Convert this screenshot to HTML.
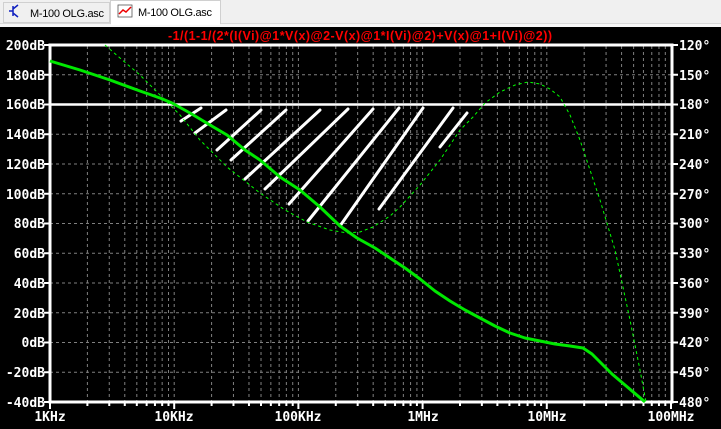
<!DOCTYPE html>
<html><head><meta charset="utf-8"><style>
html,body{margin:0;padding:0;width:721px;height:429px;overflow:hidden;background:#000}
</style></head><body>
<svg width="721" height="429" viewBox="0 0 721 429" xmlns="http://www.w3.org/2000/svg" style="display:block">
<rect x="0" y="0" width="721" height="27" fill="#f0f0f0"/>
<rect x="0" y="23" width="721" height="4" fill="#f7f7f7"/>
<line x1="0" y1="23.5" x2="721" y2="23.5" stroke="#d9d9d9"/>
<rect x="3.5" y="2.5" width="106" height="20" fill="#f0f0f0" stroke="#d0d0d0"/>
<rect x="110.5" y="0.5" width="110" height="23" fill="#fff" stroke="#d0d0d0"/>
<rect x="111" y="20" width="109" height="5" fill="#fff"/>
<g stroke="#1020c0" stroke-width="1.5" fill="none"><path d="M13 6v10M13 11h-4M13 9l5-4M13 13l5 4"/></g>
<text x="30" y="17" font-family="Liberation Sans,sans-serif" font-size="11" fill="#000" textLength="74">M-100 OLG.asc</text>
<g><rect x="118" y="5" width="14" height="12" fill="none" stroke="#555" stroke-width="0.8"/><path d="M119 14l4-4 3 2 5-5" stroke="#e00" stroke-width="1.5" fill="none"/></g>
<text x="138" y="16" font-family="Liberation Sans,sans-serif" font-size="11" fill="#000" textLength="74">M-100 OLG.asc</text>

<text x="360" y="40" text-anchor="middle" font-family="Liberation Sans,sans-serif" font-weight="bold" font-size="12.5" fill="#ff0000" textLength="384">-1/(1-1/(2*(I(Vi)@1*V(x)@2-V(x)@1*I(Vi)@2)+V(x)@1+I(Vi)@2))</text>

<g stroke="#808080" stroke-width="1" stroke-dasharray="3,3" fill="none">
<path d="M50 74.75H672M50 104.5H672M50 134.25H672M50 164H672M50 193.75H672M50 223.5H672M50 253.25H672M50 283H672M50 312.75H672M50 342.5H672M50 372.25H672"/>
</g>
<g id="vlines" stroke="#808080" stroke-dasharray="3,3"></g>
<g id="ticks" stroke="#fff" stroke-width="2"></g>

<path d="M50 45H672V402H50Z" fill="none" stroke="#fff" stroke-width="3"/>
<line x1="50" y1="104.5" x2="672" y2="104.5" stroke="#fff" stroke-width="2.5"/>

<g stroke="#fff" stroke-width="3" stroke-linecap="round">
<line x1="181" y1="121" x2="201" y2="108"/>
<line x1="195" y1="133" x2="226" y2="110"/>
<line x1="217" y1="150" x2="261" y2="110"/>
<line x1="231" y1="160" x2="286" y2="110"/>
<line x1="245" y1="179" x2="320" y2="110"/>
<line x1="265" y1="189" x2="348" y2="109"/>
<line x1="289" y1="204" x2="373" y2="109"/>
<line x1="308" y1="221" x2="399" y2="108"/>
<line x1="340" y1="226" x2="423" y2="108"/>
<line x1="379" y1="209" x2="453" y2="108"/>
<line x1="440" y1="147" x2="467" y2="113"/>
</g>

<polyline fill="none" stroke="#00ff00" stroke-width="1" stroke-dasharray="3,3" points="105,45 120,58 140,75 160,95 180,115 200,140 227,167 260,193 285,210 307,222 330,230 347,233 360,232 373,227 390,216 400,207 420,185 440,160 460,130 473,117 485,103 500,92 515,85 528,82 540,84 550,89 560,97 570,115 580,140 600,200 615,250 630,320 640,370 646,402"/>
<polyline fill="none" stroke="#00e800" stroke-width="3" stroke-linejoin="round" points="50,61 80,70 110,80 140,91 160,98 172,103 190,113 210,125 227,135 245,150 260,160 280,177 300,190 320,207 340,226 357,238 375,248 390,258 405,268 420,279 435,291 450,301 465,310 480,318 495,326 510,333 525,338 540,341 555,344 570,346 583,348 592,354 600,362 612,374 625,385 645,402"/>

<g font-family="DejaVu Sans Mono,Liberation Mono,monospace" font-weight="bold" font-size="13" fill="#fff">
<g text-anchor="end">
<text x="45" y="50">200dB</text><text x="45" y="80">180dB</text><text x="45" y="109">160dB</text><text x="45" y="139">140dB</text><text x="45" y="169">120dB</text><text x="45" y="199">100dB</text><text x="45" y="228">80dB</text><text x="45" y="258">60dB</text><text x="45" y="288">40dB</text><text x="45" y="318">20dB</text><text x="45" y="347">0dB</text><text x="45" y="377">-20dB</text><text x="45" y="407">-40dB</text>
</g>
<g>
<text x="679" y="50">120°</text><text x="679" y="80">150°</text><text x="679" y="109">180°</text><text x="679" y="139">210°</text><text x="679" y="169">240°</text><text x="679" y="199">270°</text><text x="679" y="228">300°</text><text x="679" y="258">330°</text><text x="679" y="288">360°</text><text x="679" y="318">390°</text><text x="679" y="347">420°</text><text x="679" y="377">450°</text><text x="679" y="407">480°</text>
</g>
<g text-anchor="middle">
<text x="50" y="421">1KHz</text><text x="174" y="421">10KHz</text><text x="298" y="421">100KHz</text><text x="423" y="421">1MHz</text><text x="547" y="421">10MHz</text><text x="671" y="421">100MHz</text>
</g>
</g>
<g stroke="#fff" stroke-width="2">
<path d="M44 45H50M44 74.75H50M44 104.5H50M44 134.25H50M44 164H50M44 193.75H50M44 223.5H50M44 253.25H50M44 283H50M44 312.75H50M44 342.5H50M44 372.25H50M44 402H50"/>
<path d="M672 45H678M672 74.75H678M672 104.5H678M672 134.25H678M672 164H678M672 193.75H678M672 223.5H678M672 253.25H678M672 283H678M672 312.75H678M672 342.5H678M672 372.25H678M672 402H678"/>
</g>
<script>
(function(){
var ns="http://www.w3.org/2000/svg",v=document.getElementById("vlines"),t=document.getElementById("ticks"),D=124.2;
for(var d=0;d<5;d++){for(var m=2;m<=10;m++){var x=50+D*d+D*Math.log10(m);
var l=document.createElementNS(ns,"line");l.setAttribute("x1",x);l.setAttribute("x2",x);l.setAttribute("y1",46);l.setAttribute("y2",401);v.appendChild(l);
var k=document.createElementNS(ns,"line");k.setAttribute("x1",x);k.setAttribute("x2",x);k.setAttribute("y1",402);k.setAttribute("y2",m==10?409:406);t.appendChild(k);}}
var k0=document.createElementNS(ns,"line");k0.setAttribute("x1",50);k0.setAttribute("x2",50);k0.setAttribute("y1",402);k0.setAttribute("y2",409);t.appendChild(k0);
})();
</script>
</svg>
</body></html>
